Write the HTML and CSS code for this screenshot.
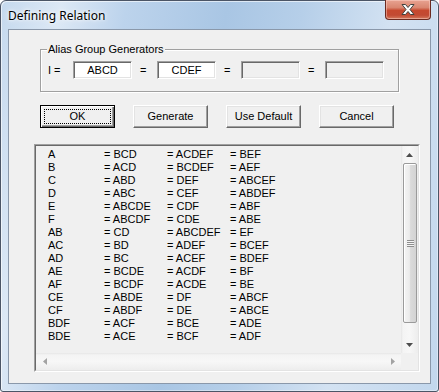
FILE: index.html
```html
<!DOCTYPE html>
<html lang="en">
  <head>
    <meta charset="UTF-8" />
    <title>Defining Relation</title>
    <link rel="stylesheet" href="styles.css">
  </head>
  <body>
    <div class="window">
      <div class="titlebar">
        <span class="title">Defining Relation</span>
        <div class="close">
          <svg width="14" height="11" viewBox="0 0 14 11">
            <polygon points="1,0.5 4.5,0.5 7,3.5 9.5,0.5 13,0.5 9,5.5 13,10.5 9.5,10.5 7,7.5 4.5,10.5 1,10.5 5,5.5" fill="#fff" stroke="#40423f" stroke-width="1" stroke-linejoin="round" />
          </svg>
        </div>
      </div>

      <div class="client">
        <div class="group">
          <span class="legend">Alias Group Generators</span>
          <div class="gen-row">
            <span class="lbl">I =</span>
            <span class="field">ABCD</span>
            <span class="eq">=</span>
            <span class="field">CDEF</span>
            <span class="eq">=</span>
            <span class="field disabled"></span>
            <span class="eq">=</span>
            <span class="field disabled"></span>
          </div>
        </div>

        <div class="buttons">
          <div class="btn default">OK</div>
          <div class="btn">Generate</div>
          <div class="btn">Use Default</div>
          <div class="btn">Cancel</div>
        </div>

        <div class="listbox">
          <div class="listbox-inner">
            <div class="list-main">
              <div class="lines">
                <span>A</span><span>= BCD</span><span>= ACDEF</span><span>= BEF</span>
                <span>B</span><span>= ACD</span><span>= BCDEF</span><span>= AEF</span>
                <span>C</span><span>= ABD</span><span>= DEF</span><span>= ABCEF</span>
                <span>D</span><span>= ABC</span><span>= CEF</span><span>= ABDEF</span>
                <span>E</span><span>= ABCDE</span><span>= CDF</span><span>= ABF</span>
                <span>F</span><span>= ABCDF</span><span>= CDE</span><span>= ABE</span>
                <span>AB</span><span>= CD</span><span>= ABCDEF</span><span>= EF</span>
                <span>AC</span><span>= BD</span><span>= ADEF</span><span>= BCEF</span>
                <span>AD</span><span>= BC</span><span>= ACEF</span><span>= BDEF</span>
                <span>AE</span><span>= BCDE</span><span>= ACDF</span><span>= BF</span>
                <span>AF</span><span>= BCDF</span><span>= ACDE</span><span>= BE</span>
                <span>CE</span><span>= ABDE</span><span>= DF</span><span>= ABCF</span>
                <span>CF</span><span>= ABDF</span><span>= DE</span><span>= ABCE</span>
                <span>BDF</span><span>= ACF</span><span>= BCE</span><span>= ADE</span>
                <span>BDE</span><span>= ACE</span><span>= BCF</span><span>= ADF</span>
              </div>
              <div class="vscroll">
                <div class="sb-btn">
                  <svg width="7" height="4" viewBox="0 0 7 4"><polygon points="3.5,0 7,4 0,4" fill="#4d4d4d" /></svg>
                </div>
                <div class="thumb">
                  <div class="grip"></div>
                </div>
                <div class="track"></div>
                <div class="sb-btn">
                  <svg width="7" height="4" viewBox="0 0 7 4"><polygon points="0,0 7,0 3.5,4" fill="#4d4d4d" /></svg>
                </div>
              </div>
            </div>
            <div class="hrow">
              <div class="hscroll">
                <div class="sb-btn">
                  <svg width="4" height="7" viewBox="0 0 4 7"><polygon points="4,0 4,7 0,3.5" fill="#a3a3a3" /></svg>
                </div>
                <div class="sb-btn">
                  <svg width="4" height="7" viewBox="0 0 4 7"><polygon points="0,0 4,3.5 0,7" fill="#a3a3a3" /></svg>
                </div>
              </div>
              <div class="corner"></div>
            </div>
          </div>
        </div>
      </div>
    </div>
  </body>
</html>
```

FILE: styles.css
```css
* {
  margin: 0;
  padding: 0;
  box-sizing: border-box;
}
body {
  background: #fff;
  font-family: "Liberation Sans", Arial, sans-serif;
  font-size: 11px;
  color: #000;
}
.window {
  width: 439px;
  height: 392px;
  border: 1px solid #4b5566;
  border-radius: 6px 6px 3px 3px;
  background: linear-gradient(100deg, #c5d9ee 0%, #dce8f5 12%, #bcd3ec 25%, #a9c6e4 45%, #b6cfe9 60%, #d3e2f2 78%, #c2d7ed 100%);
  box-shadow: inset 1px 1px 0 rgba(255, 255, 255, 0.6), inset -1px -1px 0 rgba(255, 255, 255, 0.4);
  display: flex;
  flex-direction: column;
}
.titlebar {
  height: 28px;
  display: flex;
  justify-content: space-between;
  align-items: flex-start;
  padding: 0 7px 0 7px;
}
.title {
  font-family: "Noto Sans", sans-serif;
  font-size: 12px;
  line-height: 16px;
  margin-top: 7px;
  color: #000;
  text-shadow: 0 0 6px #fff, 0 0 3px #fff;
}
.close {
  width: 46px;
  height: 20px;
  margin-top: -1px;
  border: 1px solid #6b2a20;
  border-top: none;
  border-radius: 0 0 4px 4px;
  background: linear-gradient(#e8a392 0%, #d98670 40%, #c6492f 55%, #c24a33 80%, #d47a5e 100%);
  box-shadow: inset 0 0 0 1px rgba(255, 220, 210, 0.45);
  display: flex;
  align-items: center;
  justify-content: center;
}
.client {
  margin: 0 7px;
  height: 355px;
  border: 1px solid #8a98aa;
  background: #f0f0f0;
}
.group {
  position: relative;
  margin: 19px 0 0 31px;
  width: 359px;
  height: 43px;
  border: 1px solid #a0a0a0;
  box-shadow: inset 1px 1px 0 #fff, 1px 1px 0 #fff;
}
.legend {
  position: absolute;
  top: -7px;
  left: 6px;
  padding: 0 1px;
  line-height: 13px;
  background: #f0f0f0;
}
.gen-row {
  display: flex;
  padding: 11px 0 0 7px;
  line-height: 18px;
}
.lbl {
  width: 25px;
}
.eq {
  width: 25px;
  padding-left: 8px;
}
.field {
  width: 59px;
  height: 18px;
  border: 1px solid;
  border-color: #a0a0a0 #fff #fff #a0a0a0;
  box-shadow: inset 1px 1px 0 #696969, inset -1px -1px 0 #e3e3e3;
  background: #fff;
  text-align: center;
  line-height: 16px;
}
.field.disabled {
  background: #f0f0f0;
}
.buttons {
  display: flex;
  gap: 18px;
  margin: 13px 0 0 31px;
}
.btn {
  position: relative;
  width: 75px;
  height: 23px;
  line-height: 21px;
  text-align: center;
  background: #f0f0f0;
  border: 1px solid;
  border-color: #fff #696969 #696969 #fff;
  box-shadow: inset -1px -1px 0 #a0a0a0, inset 1px 1px 0 #e3e3e3;
}
.btn.default {
  border-color: #000;
  box-shadow: inset 1px 1px 0 #fff, inset -1px -1px 0 #696969, inset -2px -2px 0 #a0a0a0;
}
.btn.default::after {
  content: '';
  position: absolute;
  inset: 3px;
  border: 1px dotted #000;
}
.listbox {
  margin: 16px 0 0 25px;
  width: 386px;
  height: 228px;
  border: 1px solid;
  border-color: #a0a0a0 #fff #fff #a0a0a0;
}
.listbox-inner {
  height: 100%;
  border: 1px solid;
  border-color: #696969 #e3e3e3 #e3e3e3 #696969;
  display: flex;
  flex-direction: column;
}
.list-main {
  flex: 1;
  display: flex;
}
.lines {
  flex: 1;
  display: grid;
  grid-template-columns: 56px 63px 63px auto;
  grid-auto-rows: 13px;
  align-content: start;
  line-height: 13px;
  padding: 2px 0 0 12px;
}
.vscroll {
  width: 17px;
  display: flex;
  flex-direction: column;
  background: linear-gradient(90deg, #e6e6e6 0, #f4f4f4 2px, #f7f7f7 50%, #ededed 100%);
}
.sb-btn {
  width: 17px;
  height: 17px;
  display: flex;
  align-items: center;
  justify-content: center;
}
.thumb {
  height: 160px;
  margin: 0 1px 0 2px;
  border: 1px solid #9a9a9a;
  border-radius: 2px;
  background: linear-gradient(90deg, #f4f4f4 0%, #ebebeb 45%, #dadada 55%, #d3d3d3 100%);
  box-shadow: inset 1px 1px 0 #fff;
  display: flex;
  align-items: center;
  justify-content: center;
}
.grip {
  width: 7px;
  height: 7px;
  background: repeating-linear-gradient(#8e8e8e 0, #8e8e8e 1px, #f4f4f4 1px, #f4f4f4 2px);
}
.track {
  flex: 1;
}
.hrow {
  height: 17px;
  display: flex;
}
.hscroll {
  flex: 1;
  display: flex;
  justify-content: space-between;
  background: linear-gradient(#e6e6e6 0, #f4f4f4 2px, #f7f7f7 50%, #ededed 100%);
}
.corner {
  width: 17px;
  background: #f0f0f0;
}
```
